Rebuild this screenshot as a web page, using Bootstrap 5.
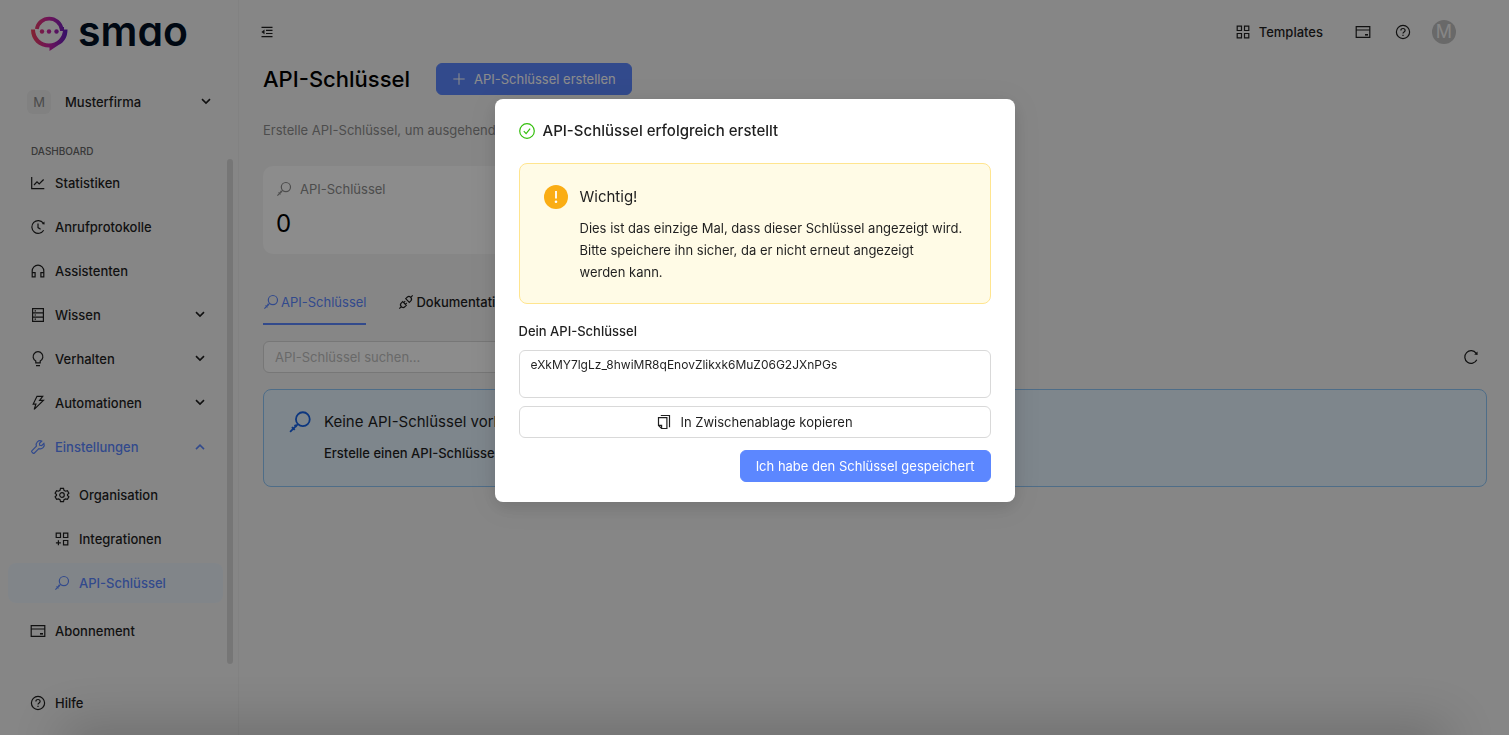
<!DOCTYPE html>
<html lang="de">
<head>
<meta charset="utf-8">
<meta name="viewport" content="width=device-width, initial-scale=1">
<title>API-Schlüssel – smao</title>
<link href="https://cdn.jsdelivr.net/npm/bootstrap@5.3.0/dist/css/bootstrap.min.css" rel="stylesheet">
<style>
:root { --ink: #1f1f1f; --brand: #5c87ff; }
body { font-family: Inter, "Liberation Sans", sans-serif; font-size: 13px; line-height: 22px; color: var(--ink); background: #f5f5f5; overflow: hidden; }
a { color: inherit; text-decoration: none; }
.ico { width: 16px; height: 16px; flex: none; fill: none; stroke: currentColor; stroke-width: 1.2; }
.side { width: 239px; flex: none; border-right: 1px solid #ededed; font-weight: 500; }
.brand-row { padding: 14px 0 0 30px; height: 66px; gap: 10px; }
.brand-text { font-size: 41px; line-height: 35px; font-weight: 600; color: #001023; font-feature-settings: "cv11"; }
.team { height: 24px; margin: 24px 27px 0 27px; background: none; border: 0; padding: 0; color: inherit; gap: 14px; font-weight: 500; }
.team-badge { width: 24px; height: 24px; border-radius: 6px; background: #ebebeb; color: #888; line-height: 24px; font-weight: 400; }
.group-label { font-size: 10px; line-height: 16px; color: #666; padding-left: 31px; margin-top: 29px; }
.menu-wrap { height: 505px; padding-right: 5px; }
.menu-bar { width: 6px; border-radius: 3px; background: #d8d8d8; }
.menu-link { height: 40px; margin: 4px 4px 0 8px; padding: 0 18px 0 22px; gap: 9px; border-radius: 8px; }
.menu-sub { padding: 4px 0; }
.menu-sub .menu-link { padding-left: 46px; }
.menu-link.on { background: #ecf3fa; }
.blue { color: var(--brand); }
.chev { width: 10px; height: 10px; stroke-width: 1.9; }
.help-link { margin: 27px 0 0 30px; gap: 9px; height: 24px; }
.main-pane { padding: 0 22px 0 24px; }
.topbar { height: 63px; padding-right: 31px; }
.top-gap { gap: 24px; }
.avatar-dot { width: 24px; height: 24px; border-radius: 50%; background: #bfbfbf; color: #f5f5f5; font-size: 18px; line-height: 24px; margin-left: -3px; }
.icon-btn { background: none; border: 0; padding: 0; color: inherit; display: flex; }
.fold-btn { margin-left: -4px; }
h1 { font-size: 22px; line-height: 32px; font-weight: 500; margin: 0; color: #000; }
.title-row { gap: 26px; }
.btn { font-size: 13px; line-height: 22px; padding: 4px 15px; border-radius: 6px; }
.btn-primary { --bs-btn-bg: var(--brand); --bs-btn-border-color: var(--brand); }
.btn-primary .ico { width: 14px; height: 14px; }
.intro { color: #8c8c8c; margin: 24px 0 25px; }
.stat { width: 396px; background: #fff; border: 0; border-radius: 10px; padding: 12px 13px 14px; height: 88px; }
.stat-label { color: #8c8c8c; }
.stat-num { font-size: 24px; line-height: 32px; margin-top: 8px; color: #000; }
.tabs { margin-top: 26px; gap: 32px; height: 45px; }
.tabs a { display: flex; align-items: center; gap: 2px; border-bottom: 2px solid transparent; font-weight: 500; }
.tabs a.on { color: var(--brand); border-color: var(--brand); font-weight: 400; }
.search { width: 360px; height: 32px; font-size: 13px; padding: 4px 11px; border-color: #d9d9d9; border-radius: 6px; }
.search::placeholder { color: #bfbfbf; opacity: 1; }
.empty-box { margin-top: 16px; background: #e6f4ff; border: 1px solid #8fc6f7; border-radius: 8px; padding: 20px 24px; height: 98px; gap: 12px; }
.empty-box .key { width: 24px; height: 24px; color: #1663e8; }
.head16 { font-size: 15px; line-height: 24px; }
.modal-backdrop { --bs-backdrop-opacity: .45; }
.modal-dialog { max-width: 520px; margin: 99px auto 0; }
.modal-content { border: 0; border-radius: 8px; padding: 20px 24px; color: var(--ink); box-shadow: 0 6px 16px rgba(0,0,0,.08), 0 4px 28px 6px rgba(0,0,0,.08); }
.warn { margin-top: 20px; background: #fffbe6; border: 1px solid #ffe58f; border-radius: 8px; padding: 21px 20px 20px 24px; gap: 12px; height: 141px; }
.warn svg { width: 24px; height: 24px; flex: none; }
.field-label { font-weight: 500; margin: 16px 0 8px; }
.key-field { font-size: 12px; line-height: 19px; height: 48px; resize: none; padding: 4px 11px; border-color: #d9d9d9; border-radius: 6px; color: var(--ink); }
.btn-copy { --bs-btn-border-color: #d9d9d9; --bs-btn-color: var(--ink); margin: 8px 0 12px; }
.ok { color: #34bf0d; }
.edge-shade { position: fixed; left: 70px; right: 70px; bottom: -20px; height: 20px; z-index: 1060; box-shadow: 0 0 50px 8px rgba(0,0,0,.22); pointer-events: none; }
</style>
</head>
<body>
<svg class="d-none" xmlns="http://www.w3.org/2000/svg">
  <symbol id="i-key" viewBox="0 0 16 16"><circle cx="9.9" cy="6.1" r="4.6"/><path d="M6.600 9.400 1.400 14.600M2.600 11.400l1.900 1.900M4.400 9.900l1.400 1.400"/></symbol>
  <symbol id="i-chart" viewBox="0 0 16 16"><path d="M1.700 2v11.700h12.600M4 10l3-3.200 2.200 2.200L13.600 4.500"/></symbol>
  <symbol id="i-history" viewBox="0 0 16 16"><path d="M13.700 11.300A6.400 6.400 0 1 1 13.300 4M8 4.600v4l2.600 1.700"/><path d="m14.400 2.600.2 3-2.800-.6z" fill="currentColor" stroke="none"/></symbol>
  <symbol id="i-head" viewBox="0 0 16 16"><path d="M2.200 13.500V8a5.800 5.800 0 0 1 11.600 0v5.500M2.200 9.600h2.900v4.200H2.200zM10.900 9.600h2.900v4.200h-2.900z"/></symbol>
  <symbol id="i-db" viewBox="0 0 16 16"><path d="M2.600 1.600h10.800v12.800H2.600zM2.600 5.900h10.800M2.600 10.100h10.800M4.600 3.800H6M4.600 8H6M4.600 12.200H6"/></symbol>
  <symbol id="i-bulb" viewBox="0 0 16 16"><path d="M5.800 11.900V10A4.900 4.900 0 1 1 10.200 10v1.900zM6 14.600h4"/></symbol>
  <symbol id="i-bolt" viewBox="0 0 16 16"><path d="M7 1.300h5.700L9.600 5.400h3.800L4.200 14.400l1.700-5.300H3.200z"/></symbol>
  <symbol id="i-tool" viewBox="0 0 16 16"><path d="M13.900 4.300 11.700 6.500 9.700 6.300 9.500 4.300 11.700 2.100A4 4 0 0 0 6.400 7.200L1.800 11.800a.8.8 0 0 0 0 1.100l1.300 1.300a.8.8 0 0 0 1.100 0L8.800 9.600A4 4 0 0 0 13.900 4.300z"/></symbol>
  <symbol id="i-gear" viewBox="0 0 16 16"><circle cx="8" cy="8" r="2.300"/><path d="M6.500 1.400h3l.5 1.900 1.500.9 1.900-.6 1.500 2.600L13.500 7.600v.8l1.400 1.400-1.500 2.600-1.900-.5-1.500.8-.5 1.900h-3L6 12.700l-1.500-.8-1.900.5-1.500-2.600 1.400-1.400v-.8L1.100 6.200l1.500-2.600 1.900.6L6 3.300z"/></symbol>
  <symbol id="i-addgrid" viewBox="0 0 16 16"><path d="M2.200 2.200h4.300v4.300H2.200zM9.500 2.200h4.300v4.300H9.500zM9.500 9.500h4.300v4.300H9.500zM4.400 9.300v5M1.900 11.800h5"/></symbol>
  <symbol id="i-grid" viewBox="0 0 16 16"><path d="M2.200 2.200h4.300v4.300H2.200zM9.500 2.200h4.300v4.300H9.500zM9.500 9.500h4.300v4.300H9.500zM2.200 9.500h4.300v4.300H2.200z"/></symbol>
  <symbol id="i-card" viewBox="0 0 16 16"><path d="M1.200 2.700h13.600v10.600H1.200zM1.200 6h13.600"/><path d="M10 10h3v1.600h-3z" fill="currentColor" stroke="none"/></symbol>
  <symbol id="i-help" viewBox="0 0 16 16"><circle cx="8" cy="8" r="6.600"/><path d="M5.900 6.500C5.900 5.200 6.800 4.500 8 4.500s2.100.8 2.100 1.900C10.100 7.900 8 7.900 8 9.500M8 10.700v1.300"/></symbol>
  <symbol id="i-down" viewBox="0 0 12 12"><path d="M1.200 2.500 6 7.300l4.800-4.800"/></symbol>
  <symbol id="i-up" viewBox="0 0 12 12"><path d="M1.200 8.500 6 3.700l4.800 4.800"/></symbol>
  <symbol id="i-fold" viewBox="0 0 16 16"><path d="M2.500 3.300h11M7 6.400h6.500M7 9.500h6.500M2.500 12.600h11"/><path d="M5.500 5.600v4.700L2.400 8z" fill="currentColor" stroke="none"/></symbol>
  <symbol id="i-plus" viewBox="0 0 16 16"><path d="M8 1.500v13M1.500 8h13"/></symbol>
  <symbol id="i-api" viewBox="0 0 16 16"><path d="M7.700 4.700l3.600 3.600 1.500-1.500a2.550 2.550 0 0 0-3.600-3.600zM4.700 7.700l3.600 3.600-1.500 1.500a2.550 2.550 0 0 1-3.600-3.600zM12.700 3.300l2-2M3.300 12.700l-2 2M5.700 8.700l1.500-1.500M7.300 10.300l1.500-1.500"/></symbol>
  <symbol id="i-reload" viewBox="0 0 16 16"><path d="M13.800 10.700A6.300 6.300 0 1 1 13.200 4.300"/><path d="m14.500 2.500.1 3.600-3.400-.6z" fill="currentColor" stroke="none"/></symbol>
  <symbol id="i-copy" viewBox="0 0 16 16"><path d="M4.800 1.500h8.700v11.700M2.500 3.600h8.400v10.900H5.600L2.500 11.400zM5.600 14.200v-2.800H2.800"/></symbol>
</svg>

<div class="d-flex vh-100">
  <aside class="side d-flex flex-column">
    <a href="#" class="brand-row d-flex" aria-label="smao">
      <svg width="38" height="38" viewBox="0 0 38 38" fill="none" aria-hidden="true">
        <defs><linearGradient id="lg" x1="0" y1="0" x2="38" y2="0" gradientUnits="userSpaceOnUse"><stop stop-color="#f04452"/><stop offset=".5" stop-color="#c924a4"/><stop offset="1" stop-color="#5a1fc0"/></linearGradient></defs>
        <path d="M6.800 15A12.600 12.600 0 0 1 31.600 15H34" stroke="url(#lg)" stroke-width="3.800"/>
        <path d="M1 15.500H5A14 14 0 0 0 33 15.500H37.500C37.500 23.500 34 28.500 28.500 31L19.500 37V33.500C9 33.500 1 26.500 1 15.500Z" fill="url(#lg)"/>
        <g fill="url(#lg)"><circle cx="12" cy="17.500" r="2.200"/><circle cx="19" cy="17.500" r="2.200"/><circle cx="26.500" cy="17.500" r="2.200"/></g>
      </svg>
      <span class="brand-text">smao</span>
    </a>
    <button type="button" class="team d-flex align-items-center">
      <span class="team-badge text-center">M</span><span>Musterfirma</span>
      <svg class="ico chev ms-auto"><use href="#i-down"/></svg>
    </button>
    <div class="group-label">DASHBOARD</div>
    <div class="menu-wrap d-flex">
      <nav class="flex-grow-1">
        <a href="#" class="menu-link d-flex align-items-center"><svg class="ico"><use href="#i-chart"/></svg>Statistiken</a>
        <a href="#" class="menu-link d-flex align-items-center"><svg class="ico"><use href="#i-history"/></svg>Anrufprotokolle</a>
        <a href="#" class="menu-link d-flex align-items-center"><svg class="ico"><use href="#i-head"/></svg>Assistenten</a>
        <a href="#" class="menu-link d-flex align-items-center"><svg class="ico"><use href="#i-db"/></svg>Wissen<svg class="ico chev ms-auto"><use href="#i-down"/></svg></a>
        <a href="#" class="menu-link d-flex align-items-center"><svg class="ico"><use href="#i-bulb"/></svg>Verhalten<svg class="ico chev ms-auto"><use href="#i-down"/></svg></a>
        <a href="#" class="menu-link d-flex align-items-center"><svg class="ico"><use href="#i-bolt"/></svg>Automationen<svg class="ico chev ms-auto"><use href="#i-down"/></svg></a>
        <a href="#" class="menu-link blue d-flex align-items-center"><svg class="ico"><use href="#i-tool"/></svg>Einstellungen<svg class="ico chev ms-auto"><use href="#i-up"/></svg></a>
        <div class="menu-sub">
          <a href="#" class="menu-link d-flex align-items-center"><svg class="ico"><use href="#i-gear"/></svg>Organisation</a>
          <a href="#" class="menu-link d-flex align-items-center"><svg class="ico"><use href="#i-addgrid"/></svg>Integrationen</a>
          <a href="#" class="menu-link on blue d-flex align-items-center"><svg class="ico"><use href="#i-key"/></svg>API-Schlüssel</a>
        </div>
        <a href="#" class="menu-link d-flex align-items-center"><svg class="ico"><use href="#i-card"/></svg>Abonnement</a>
      </nav>
      <div class="menu-bar"></div>
    </div>
    <a href="#" class="help-link d-flex align-items-center"><svg class="ico"><use href="#i-help"/></svg>Hilfe</a>
  </aside>

  <main class="main-pane flex-grow-1">
    <header class="topbar d-flex align-items-center justify-content-between">
      <button type="button" class="icon-btn fold-btn" aria-label="Menü einklappen"><svg class="ico"><use href="#i-fold"/></svg></button>
      <div class="top-gap d-flex align-items-center">
        <a href="#" class="d-flex align-items-center gap-2 me-2 fw-medium"><svg class="ico"><use href="#i-grid"/></svg>Templates</a>
        <button type="button" class="icon-btn" aria-label="Abonnement"><svg class="ico"><use href="#i-card"/></svg></button>
        <button type="button" class="icon-btn" aria-label="Hilfe"><svg class="ico"><use href="#i-help"/></svg></button>
        <span class="avatar-dot text-center">M</span>
      </div>
    </header>
    <div class="title-row d-flex align-items-center">
      <h1>API-Schlüssel</h1>
      <button type="button" class="btn btn-primary d-flex align-items-center gap-2"><svg class="ico"><use href="#i-plus"/></svg>API-Schlüssel erstellen</button>
    </div>
    <p class="intro">Erstelle API-Schlüssel, um ausgehende</p>
    <div class="card stat">
      <div class="stat-label d-flex align-items-center gap-2"><svg class="ico"><use href="#i-key"/></svg>API-Schlüssel</div>
      <div class="stat-num">0</div>
    </div>
    <nav class="tabs d-flex">
      <a href="#" class="on"><svg class="ico"><use href="#i-key"/></svg>API-Schlüssel</a>
      <a href="#"><svg class="ico"><use href="#i-api"/></svg>Dokumentation</a>
    </nav>
    <div class="d-flex align-items-center justify-content-between mt-3 pe-2">
      <input type="search" class="form-control search" placeholder="API-Schlüssel suchen..." aria-label="API-Schlüssel suchen">
      <button type="button" class="icon-btn" aria-label="Neu laden"><svg class="ico"><use href="#i-reload"/></svg></button>
    </div>
    <section class="empty-box d-flex">
      <svg class="ico key"><use href="#i-key"/></svg>
      <div><div class="head16">Keine API-Schlüssel vorhanden</div><div class="mt-2 fw-medium">Erstelle einen API-Schlüssel</div></div>
    </section>
  </main>
</div>

<div class="modal-backdrop show"></div>
<div class="modal d-block" role="dialog" aria-modal="true" aria-labelledby="dlg-title">
  <div class="modal-dialog">
    <div class="modal-content">
      <div class="head16 fw-medium d-flex align-items-center gap-2" id="dlg-title">
        <svg class="ico ok" viewBox="0 0 16 16"><circle cx="8" cy="8" r="7.300"/><path d="m4.800 8.200 2.300 2.500 4-5"/></svg>API-Schlüssel erfolgreich erstellt
      </div>
      <div class="warn d-flex">
        <svg viewBox="0 0 24 24"><circle cx="12" cy="12" r="12" fill="#faad14"/><path d="M12 6v7.500" stroke="#fff" stroke-width="1.800"/><circle cx="12" cy="16.800" r="1.300" fill="#fff"/></svg>
        <div><div class="head16">Wichtig!</div><div class="mt-2">Dies ist das einzige Mal, dass dieser Schlüssel angezeigt wird.<br>Bitte speichere ihn sicher, da er nicht erneut angezeigt<br>werden kann.</div></div>
      </div>
      <label class="field-label" for="key">Dein API-Schlüssel</label>
      <textarea id="key" class="form-control key-field" readonly>eXkMY7lgLz_8hwiMR8qEnovZlikxk6MuZ06G2JXnPGs</textarea>
      <button type="button" class="btn btn-copy d-flex align-items-center justify-content-center gap-2"><svg class="ico"><use href="#i-copy"/></svg>In Zwischenablage kopieren</button>
      <button type="button" class="btn btn-primary align-self-end">Ich habe den Schlüssel gespeichert</button>
    </div>
  </div>
</div>
<div class="edge-shade"></div>
<script src="https://cdn.jsdelivr.net/npm/bootstrap@5.3.0/dist/js/bootstrap.bundle.min.js"></script>
</body>
</html>
